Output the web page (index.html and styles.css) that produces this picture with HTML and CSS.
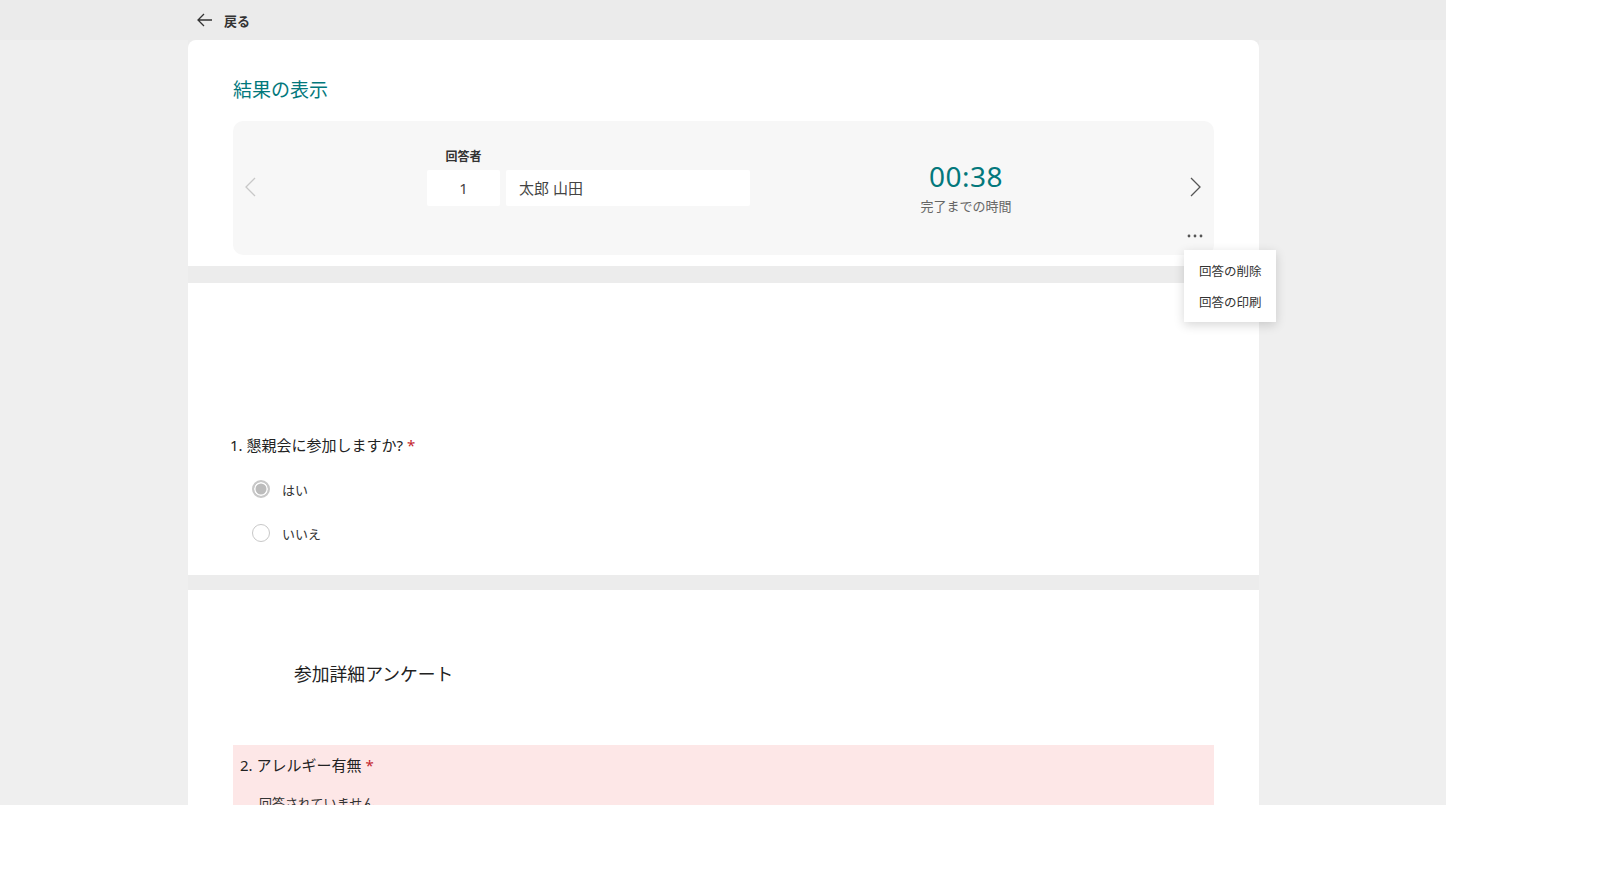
FILE: index.html
```html
<!DOCTYPE html>
<html lang="ja">
<head>
    <meta charset="UTF-8">
    <meta name="viewport" content="width=device-width, initial-scale=1.0">
    <title>結果の表示</title>
    <link rel="stylesheet" href="styles.css">
</head>
<body>
    <div class="page">
        <div class="topbar">
            <button class="back-btn" type="button">
                <svg width="16" height="14" viewBox="0 0 16 14"><path d="M7 1 L1 7 L7 13 M1 7 H15" fill="none" stroke="#333" stroke-width="1.3"/></svg>
                <span>戻る</span>
            </button>
        </div>

        <div class="main">
            <!-- 結果ヘッダー -->
            <div class="card card-top">
                <h1 class="result-title">結果の表示</h1>
                <div class="panel">
                    <div class="panel-row">
                        <button class="nav-btn" type="button">
                            <svg width="12" height="20" viewBox="0 0 12 20"><path d="M10 1 L1 10 L10 19" fill="none" stroke="#c8c8c8" stroke-width="1.3"/></svg>
                        </button>
                        <div class="responder">
                            <div class="responder-label">回答者</div>
                            <div class="responder-fields">
                                <div class="field field-num">1</div>
                                <div class="field field-name">太郎 山田</div>
                            </div>
                        </div>
                        <div class="timer">
                            <div class="timer-value">00:38</div>
                            <div class="timer-label">完了までの時間</div>
                        </div>
                        <button class="nav-btn nav-next" type="button">
                            <svg width="12" height="20" viewBox="0 0 12 20"><path d="M2 1 L11 10 L2 19" fill="none" stroke="#555" stroke-width="1.3"/></svg>
                        </button>
                    </div>
                    <div class="panel-foot">
                        <button class="more-btn" type="button">
                            <svg width="16" height="4" viewBox="0 0 16 4"><circle cx="2" cy="2" r="1.4" fill="#555"/><circle cx="8" cy="2" r="1.4" fill="#555"/><circle cx="14" cy="2" r="1.4" fill="#555"/></svg>
                        </button>
                    </div>
                    <div class="menu">
                        <div class="menu-item">回答の削除</div>
                        <div class="menu-item">回答の印刷</div>
                    </div>
                </div>
            </div>

            <!-- 質問1 -->
            <div class="card card-q1">
                <div class="question">1. 懇親会に参加しますか? <span class="required">*</span></div>
                <div class="option">
                    <span class="radio checked"></span>
                    <span class="option-text">はい</span>
                </div>
                <div class="option">
                    <span class="radio"></span>
                    <span class="option-text">いいえ</span>
                </div>
            </div>

            <!-- セクション -->
            <div class="card card-section">
                <div class="section-title">参加詳細アンケート</div>
                <div class="question-box">
                    <div class="question">2. アレルギー有無 <span class="required">*</span></div>
                    <div class="no-answer">回答されていません。</div>
                </div>
            </div>
        </div>
    </div>
</body>
</html>
```

FILE: styles.css
```css
/* 基本 */
body {
    margin: 0;
    padding: 0;
    background-color: #fff;
    font-family: "Noto Sans", "Noto Sans CJK JP", sans-serif;
    color: #333;
}
button {
    background: none;
    border: none;
    padding: 0;
    font-family: inherit;
    cursor: pointer;
}
.page {
    width: 1446px;
    height: 805px;
    overflow: hidden;
    background-color: #efefef;
}

/* 上部バー */
.topbar {
    height: 40px;
    background-color: #ebebeb;
    display: flex;
    align-items: center;
    padding-left: 197px;
}
.back-btn {
    display: flex;
    align-items: center;
    gap: 11px;
    font-size: 13px;
    font-weight: bold;
    color: #333;
}

.main {
    width: 1071px;
    margin-left: 188px;
    background-color: #ececec;
    display: flex;
    flex-direction: column;
}
.card {
    background-color: #fff;
    padding: 0 45px 0 42px;
}
.card-top {
    border-radius: 8px 8px 0 0;
    padding: 36px 45px 11px 45px;
    position: relative;
    z-index: 5;
}
.result-title {
    margin: 0 0 17px;
    font-size: 19px;
    line-height: 28px;
    font-weight: normal;
    color: #03787c;
}

/* 回答者パネル */
.panel {
    position: relative;
    background-color: #f7f7f7;
    border-radius: 10px;
    padding: 28px 7px 10px 6px;
}
.panel-row {
    height: 76px;
    display: flex;
    align-items: center;
}
.nav-btn {
    width: 24px;
    height: 36px;
    display: flex;
    align-items: center;
    justify-content: center;
}
.responder {
    margin-left: 164px;
    margin-bottom: 20px;
    display: flex;
    flex-direction: column;
    align-items: flex-start;
}
.responder-label {
    width: 73px;
    text-align: center;
    font-size: 12px;
    line-height: 16px;
    font-weight: bold;
    color: #333;
    margin-bottom: 5px;
}
.responder-fields {
    display: flex;
    gap: 6px;
}
.field {
    height: 36px;
    line-height: 36px;
    background-color: #fff;
    border-radius: 2px;
    font-size: 15px;
    color: #444;
}
.field-num {
    width: 73px;
    text-align: center;
}
.field-name {
    width: 231px;
    padding-left: 13px;
}
.timer {
    width: 140px;
    margin-left: 146px;
    text-align: center;
}
.timer-value {
    font-size: 28px;
    line-height: 34px;
    color: #03787c;
    letter-spacing: 0.5px;
}
.timer-label {
    margin-top: 3px;
    font-size: 13px;
    line-height: 20px;
    color: #666;
}
.nav-next {
    margin-left: auto;
}
.panel-foot {
    margin-top: 3px;
    margin-bottom: 1px;
    display: flex;
    justify-content: flex-end;
}
.more-btn {
    width: 24px;
    height: 16px;
    display: flex;
    align-items: center;
    justify-content: center;
}

/* メニュー */
.menu {
    position: absolute;
    left: 951px;
    top: 129px;
    width: 92px;
    padding: 6px 0 4px;
    background-color: #fff;
    box-shadow: 0 3px 10px rgba(0, 0, 0, 0.16);
    z-index: 10;
}
.menu-item {
    height: 31px;
    line-height: 31px;
    padding-left: 15px;
    font-size: 12.5px;
    color: #333;
}

/* 質問 */
.card-q1 {
    margin-top: 17px;
    padding-top: 151px;
    padding-bottom: 20px;
}
.question {
    font-size: 15px;
    line-height: 22px;
    color: #222;
}
.required {
    color: #c4262e;
}
.option {
    height: 44px;
    display: flex;
    align-items: center;
    margin-left: 22px;
}
.card-q1 .question + .option {
    margin-top: 11px;
}
.radio {
    width: 18px;
    height: 18px;
    box-sizing: border-box;
    border: 1px solid #c8c8c8;
    border-radius: 50%;
    background-color: #fff;
    margin-right: 12px;
}
.radio.checked {
    border: 2px solid #c8c8c8;
    background-color: #bcbcbc;
    box-shadow: inset 0 0 0 1.5px #fff;
}
.option-text {
    font-size: 13px;
    color: #333;
}

/* セクション */
.card-section {
    margin-top: 15px;
    padding-top: 71px;
    padding-right: 45px;
    padding-left: 45px;
    height: 300px;
}
.section-title {
    padding-left: 61px;
    font-size: 17.8px;
    line-height: 26px;
    color: #222;
    margin-bottom: 58px;
}
.question-box {
    background-color: #fde7e7;
    padding: 9px 7px 20px;
}
.no-answer {
    margin-top: 17px;
    padding-left: 19px;
    font-size: 13px;
    color: #333;
}
```
